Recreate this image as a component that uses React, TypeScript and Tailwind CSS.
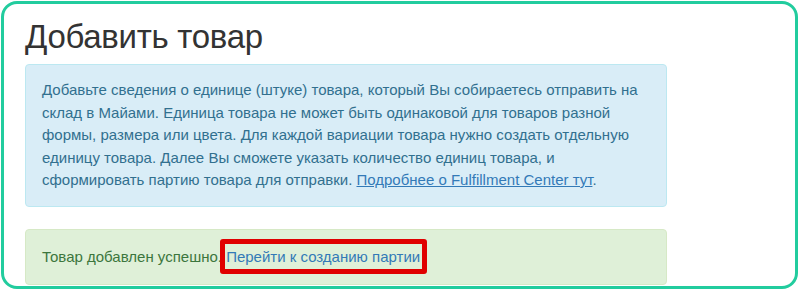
export default function App() {
  return (
    <div className="w-[800px] h-[291px] bg-white pt-[1px] pl-[1px]" style={{ fontFamily: '"Liberation Sans", Arial, sans-serif' }}>
      <div className="w-[797px] h-[288px] border-[3px] border-[#22cc9e] rounded-[16px] pl-[21px] pt-[13px] overflow-hidden">
        {/* Title */}
        <h1 className="text-[33px] leading-[40px] tracking-[-0.3px] text-[#333333] font-normal">Добавить товар</h1>

        {/* Info alert */}
        <div className="mt-[7px] w-[642px] bg-[#d9edf7] border border-[#bce8f1] rounded-[4px] px-[16px] py-[14px] text-[15px] leading-[22.5px] text-[#31708f]">
          Добавьте сведения о единице (штуке) товара, который Вы собираетесь отправить на склад в Майами. Единица товара не может быть одинаковой для товаров разной формы, размера или цвета. Для каждой вариации товара нужно создать отдельную единицу товара. Далее Вы сможете указать количество единиц товара, и сформировать партию товара для отправки.{' '}
          <a href="#" className="text-[#337ab7] underline">Подробнее о Fulfillment Center тут</a>.
        </div>

        {/* Success alert */}
        <div className="mt-[22px] w-[642px] bg-[#dff0d8] border border-[#d6e9c6] rounded-[4px] px-[16px] py-[16px] text-[15px] leading-[22.5px] text-[#3c763d]">
          Товар добавлен успешно.{' '}
          <span className="relative">
            <a href="#" className="text-[#337ab7]">Перейти к созданию партии</a>
            <span className="absolute left-[-6px] right-[-7px] top-[-9px] bottom-[-9px] border-[5px] border-[#e00000] rounded-[3px]" />
          </span>
        </div>
      </div>
    </div>
  );
}
